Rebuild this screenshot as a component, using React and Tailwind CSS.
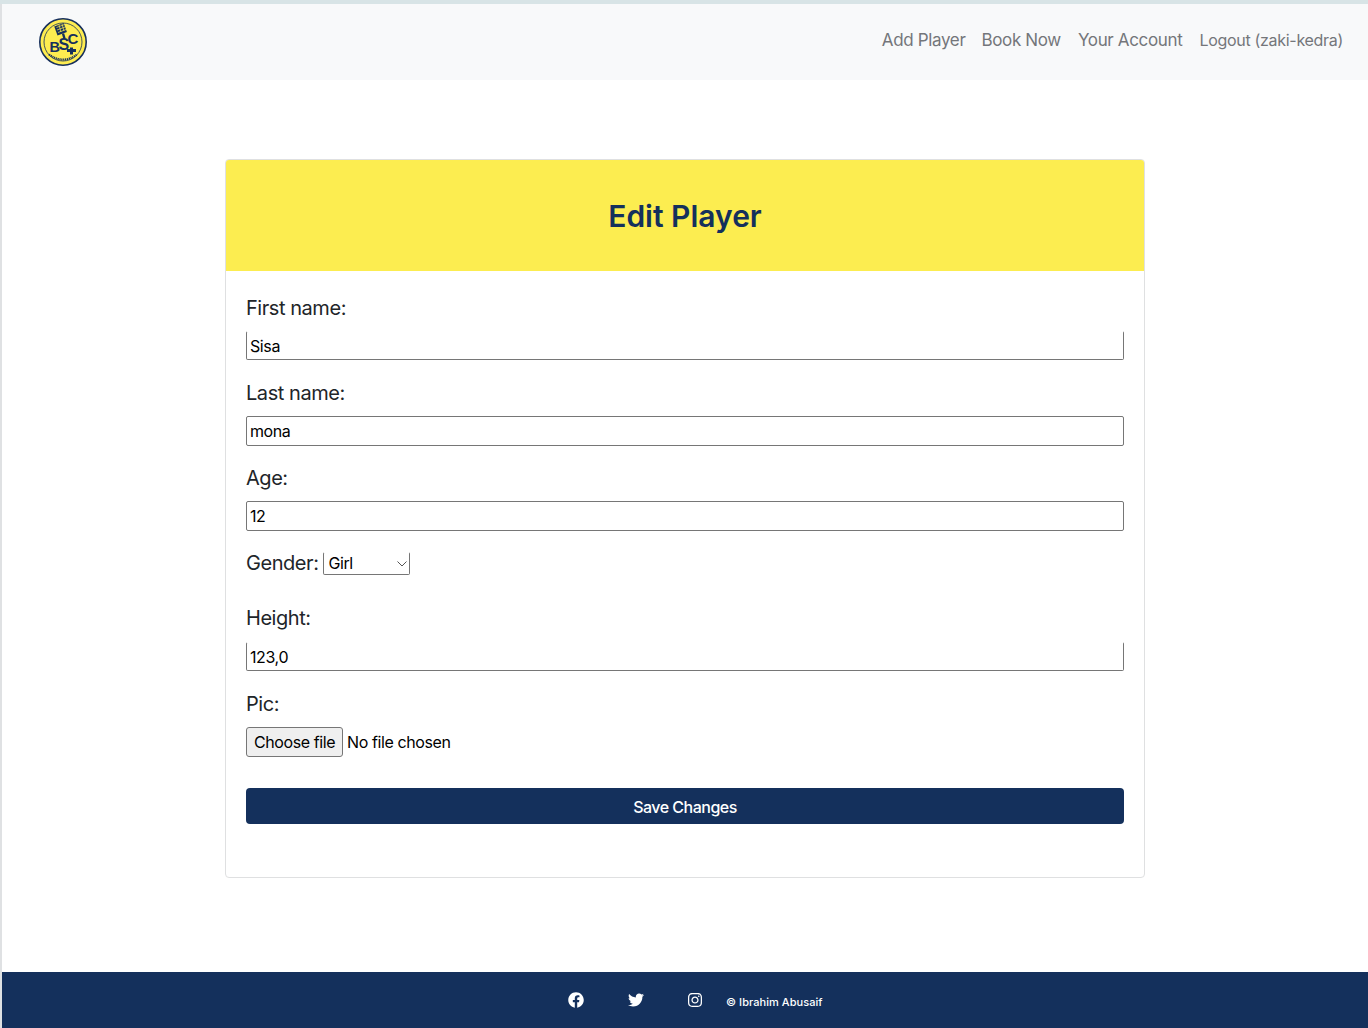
import React from "react";
import { FaFacebook, FaTwitter, FaInstagram } from "react-icons/fa";

const font = { fontFamily: "Inter, sans-serif" };
const logoFont = "Liberation Sans, sans-serif";

function Logo() {
  return (
    <svg width="48" height="48" viewBox="0 0 48 48" className="block">
      <circle cx="24" cy="24" r="23.2" fill="#fdec50" stroke="#17305c" strokeWidth="1.6" />
      <circle cx="24" cy="24" r="19" fill="none" stroke="#17305c" strokeWidth="0.8" />
      <rect x="16.5" y="6.5" width="10" height="9.5" fill="#17305c" transform="rotate(-20 21.5 11)" />
      <path d="M17.5 9.5l8 -3M18 12l8 -3M19 14.5l8 -3M20 7l2 7M23 6l2 7" stroke="#fdec50" strokeWidth="0.7" />
      <path d="M24 15.5l1.5 5" stroke="#17305c" strokeWidth="2.4" />
      <text x="10.5" y="33.5" fontSize="14.5" fontWeight="700" fill="#17305c" fontFamily={logoFont}>B</text>
      <text x="19.5" y="32" fontSize="16" fontWeight="700" fill="#17305c" fontFamily={logoFont}>S</text>
      <text x="28.5" y="25.5" fontSize="15" fontWeight="700" fill="#17305c" fontFamily={logoFont}>C</text>
      <path d="M31 29.5h3v1.5h3v3h-3v2.5h-3v-2.5h-3v-3h3z" fill="#17305c" />
      <path d="M10 36.5q14 10 28 0" fill="none" stroke="#17305c" strokeWidth="2" strokeDasharray="1.2 0.7" />
    </svg>
  );
}

function Field({ label, value, h = "h-[30px]", mb = "mb-[17px]", labelMb = "mb-[8px]", noTop = false }) {
  return (
    <div className={mb}>
      <label className={`block h-[30px] ${labelMb} text-[20px] leading-[30px] tracking-[-0.45px] text-[#212529]`}>{label}</label>
      <input
        readOnly
        value={value}
        className={`block w-[878px] ${h} border border-[#767676] ${noTop ? "border-t-transparent" : ""} rounded-[2px] px-[3px] text-[16px] tracking-[-0.4px] text-black bg-white outline-none`}
        style={font}
      />
    </div>
  );
}

export default function App() {
  return (
    <div className="flex flex-col h-[1028px] w-[1368px] bg-white overflow-hidden" style={font}>
      <div className="h-[4px] bg-[#d8e4e6] shrink-0" />
      <div className="flex flex-1 min-h-0">
        <div className="w-[2px] bg-[#dfe1e3] shrink-0" />
        <div className="flex flex-col flex-1 min-w-0">
          <nav className="h-[76px] shrink-0 bg-[#f8f9fa] flex items-center justify-between pl-[37px] pr-[25px]">
            <Logo />
            <div className="flex items-center text-[#74767a] text-[17px] tracking-[-0.35px] pb-[2px]">
              <a className="mr-[16px]">Add Player</a>
              <a className="mr-[17px]">Book Now</a>
              <a className="mr-[17px]">Your Account</a>
              <a className="text-[16px] tracking-[-0.3px] mb-[3px]">Logout (zaki-kedra)</a>
            </div>
          </nav>
          <main className="flex-1 pt-[79px] pl-[223px]">
            <div className="w-[920px] h-[719px] border border-[#dfe0e1] rounded-[4px] overflow-hidden">
              <div className="h-[111px] pt-[2px] bg-[#fced50] flex items-center justify-center">
                <h1 className="text-[30px] font-semibold text-[#14305c]">Edit Player</h1>
              </div>
              <div className="px-[20px] pt-[22px]">
                <Field label="First name:" value="Sisa" h="h-[29px]" mb="mb-[18px]" noTop />
                <Field label="Last name:" value="mona" />
                <Field label="Age:" value="12" />
                <div className="flex items-center h-[30px] mb-[25px] text-[20px] tracking-[-0.45px] text-[#212529]">
                  <span>Gender:</span>
                  <div className="relative ml-[5px] w-[87px] h-[23px]">
                    <select
                      defaultValue="Girl"
                      className="block appearance-none w-full h-full border border-[#767676] border-t-transparent rounded-[2px] bg-white text-[16px] leading-[20px] tracking-[-0.4px] text-black pl-[4px] pb-[2px] outline-none"
                      style={font}
                    >
                      <option>Girl</option>
                      <option>Boy</option>
                    </select>
                    <svg width="10" height="6" viewBox="0 0 10 6" className="absolute right-[3px] top-[9px]">
                      <path d="M0.5 0.5L5 5L9.5 0.5" fill="none" stroke="#555" strokeWidth="1" />
                    </svg>
                  </div>
                </div>
                <Field label="Height:" value="123,0" h="h-[29px]" mb="mb-[18px]" labelMb="mb-[9px]" noTop />
                <div className="mb-[31px]">
                  <label className="block h-[30px] mb-[7px] text-[20px] leading-[30px] tracking-[-0.45px] text-[#212529]">Pic:</label>
                  <div className="flex items-center h-[31px] text-[16px] tracking-[-0.4px] text-black">
                    <button className="h-[30px] w-[97px] border border-[#767676] rounded-[3px] bg-[#efefef]">Choose file</button>
                    <span className="ml-[4px]">No file chosen</span>
                  </div>
                </div>
                <button className="block w-[878px] h-[36px] pt-[1px] rounded-[4px] bg-[#14305c] text-white text-[16px] tracking-[-0.5px] font-medium">Save Changes</button>
              </div>
            </div>
          </main>
          <footer className="h-[56px] shrink-0 bg-[#14305c] flex items-center text-white pl-[566px]">
            <FaFacebook className="text-[16px]" />
            <FaTwitter className="text-[16px] ml-[44px]" />
            <FaInstagram className="text-[16px] ml-[43px]" />
            <span className="ml-[23px] text-[11px] tracking-[0.05px] font-medium mt-[4px]">© Ibrahim Abusaif</span>
          </footer>
        </div>
      </div>
    </div>
  );
}
